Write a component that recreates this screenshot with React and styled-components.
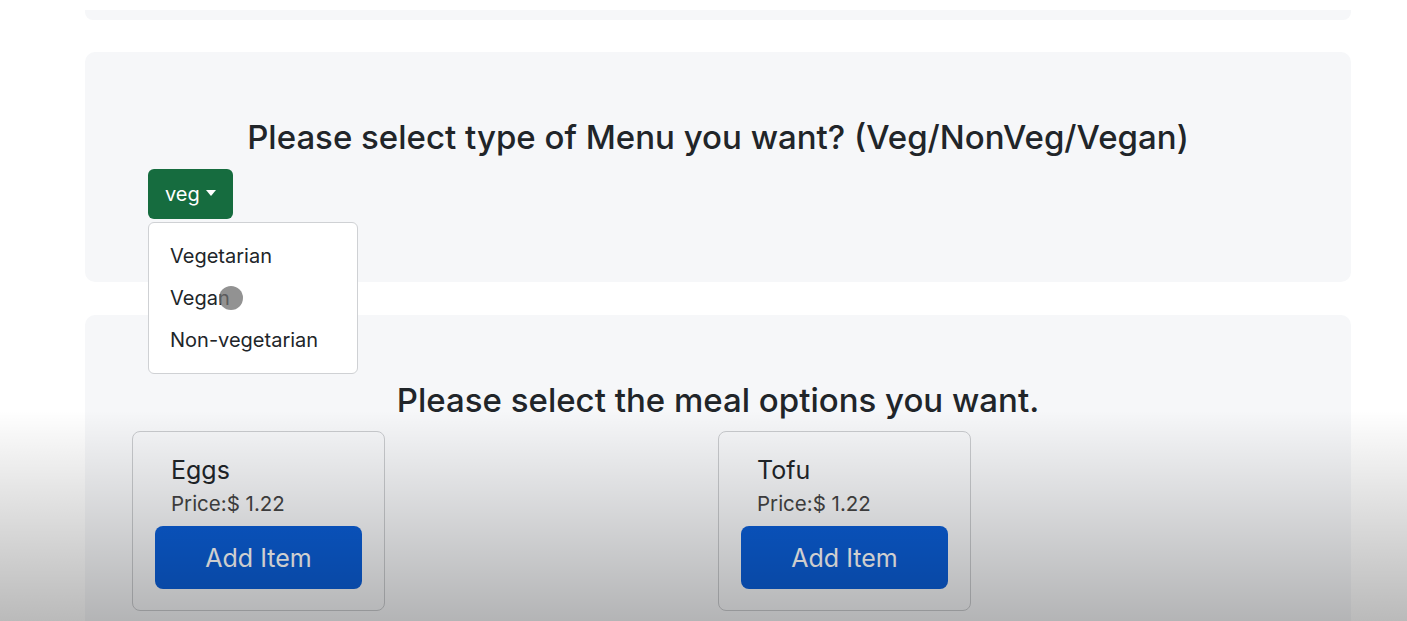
import React from "react";
import styled, { createGlobalStyle } from "styled-components";

const GlobalStyle = createGlobalStyle`
  body {
    margin: 0;
    background: #ffffff;
    font-family: "Inter", "Liberation Sans", sans-serif;
    color: #212529;
  }
`;

const Page = styled.div`
  position: relative;
  height: 621px;
  overflow: hidden;
  padding: 10px 56px 0 85px;
  box-sizing: border-box;
`;

const PrevPanel = styled.div`
  height: 10px;
  background: #f6f7f9;
  border-radius: 0 0 8px 8px;
`;

const Panel = styled.section`
  margin-top: ${(p) => p.$gap}px;
  height: ${(p) => p.$height}px;
  background: #f6f7f9;
  border-radius: 10px;
  padding-top: 65px;
  box-sizing: border-box;
`;

const Heading = styled.h2`
  margin: 0;
  text-align: center;
  font-size: 33px;
  line-height: 40px;
  font-weight: 500;
  color: #212529;
`;

const DropdownWrap = styled.div`
  position: relative;
  display: inline-block;
  margin: 12px 0 0 63px;
`;

const ToggleButton = styled.button`
  display: flex;
  align-items: center;
  gap: 6px;
  height: 50px;
  padding: 0 17px;
  border: none;
  border-radius: 6px;
  background: #166c3f;
  color: #fff;
  font-family: inherit;
  font-size: 20px;
  cursor: pointer;
`;

const Caret = styled.span`
  width: 0;
  height: 0;
  border-left: 5px solid transparent;
  border-right: 5px solid transparent;
  border-top: 6px solid #fff;
  margin-top: -2px;
`;

const Menu = styled.ul`
  position: absolute;
  top: 53px;
  left: 0;
  width: 210px;
  margin: 0;
  padding: 12px 0;
  list-style: none;
  background: #fff;
  border: 1px solid #cfd1d4;
  border-radius: 6px;
  box-sizing: border-box;
  z-index: 2;
`;

const MenuItem = styled.li`
  position: relative;
  height: 42px;
  line-height: 42px;
  padding-left: 21px;
  font-size: 20px;
  color: #212529;
`;

const CursorDot = styled.span`
  position: absolute;
  left: 70px;
  top: 9px;
  width: 24px;
  height: 24px;
  border-radius: 50%;
  background: rgba(110, 110, 110, 0.75);
`;

const CardGrid = styled.div`
  display: grid;
  grid-template-columns: 1fr 1fr;
  padding: 11px 47px 0;
`;

const Card = styled.div`
  width: 253px;
  box-sizing: border-box;
  padding: 23px 22px 21px;
  border: 1px solid #c9cbce;
  border-radius: 8px;
  background: #f6f7f9;
`;

const ItemName = styled.div`
  padding-left: 16px;
  font-size: 25px;
  line-height: 30px;
  color: #212529;
`;

const ItemPrice = styled.div`
  margin-top: 6px;
  padding-left: 16px;
  font-size: 20.5px;
  line-height: 26px;
  color: #444;
`;

const AddButton = styled.button`
  display: block;
  width: 100%;
  height: 63px;
  margin-top: 9px;
  border: none;
  border-radius: 8px;
  background: #0b5ed7;
  color: #fff;
  font-family: inherit;
  font-size: 25px;
  cursor: pointer;
`;

const Shade = styled.div`
  position: absolute;
  left: 0;
  right: 0;
  top: 410px;
  bottom: 0;
  background: linear-gradient(to bottom, rgba(0, 0, 0, 0), rgba(0, 0, 0, 0.27));
  pointer-events: none;
  z-index: 5;
`;

const menuOptions = ["Vegetarian", "Vegan", "Non-vegetarian"];

const meals = [
  { id: 1, name: "Eggs", price: "1.22" },
  { id: 2, name: "Tofu", price: "1.22" },
];

const App = () => {
  return (
    <>
      <GlobalStyle />
      <Page>
        <PrevPanel />
        <Panel $gap={32} $height={230}>
          <Heading>Please select type of Menu you want? (Veg/NonVeg/Vegan)</Heading>
          <DropdownWrap>
            <ToggleButton>
              veg <Caret />
            </ToggleButton>
            <Menu>
              {menuOptions.map((option) => (
                <MenuItem key={option}>
                  {option}
                  {option === "Vegan" && <CursorDot />}
                </MenuItem>
              ))}
            </Menu>
          </DropdownWrap>
        </Panel>
        <Panel $gap={33} $height={400}>
          <Heading>Please select the meal options you want.</Heading>
          <CardGrid>
            {meals.map((meal) => (
              <Card key={meal.id}>
                <ItemName>{meal.name}</ItemName>
                <ItemPrice>Price:$ {meal.price}</ItemPrice>
                <AddButton>Add Item</AddButton>
              </Card>
            ))}
          </CardGrid>
        </Panel>
        <Shade />
      </Page>
    </>
  );
};

export default App;
